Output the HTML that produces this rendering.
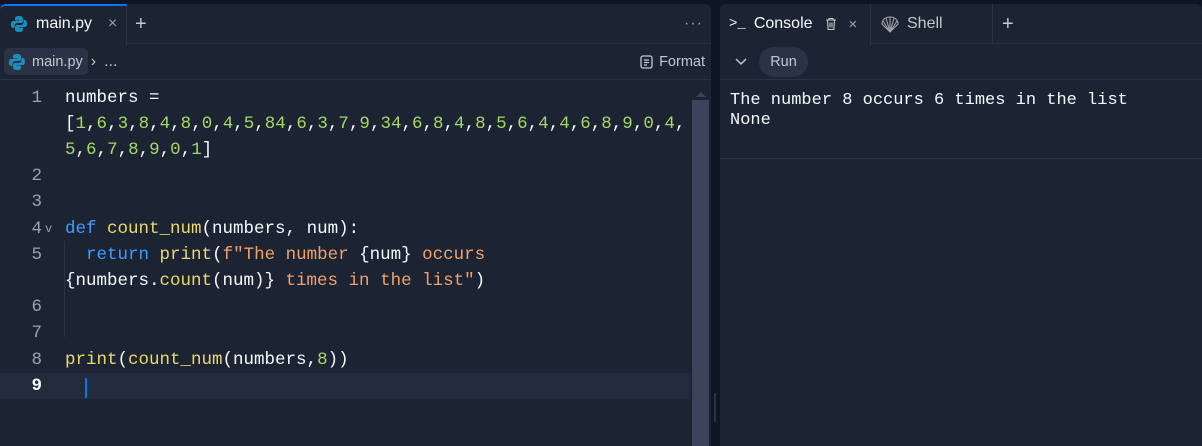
<!DOCTYPE html>
<html><head><meta charset="utf-8"><style>
*{margin:0;padding:0;box-sizing:border-box}
body{width:1202px;height:446px;background:#0e1525;position:relative;overflow:hidden;font-family:"Liberation Sans",sans-serif;color:#f5f9fc}
.pane{position:absolute;top:4px;background:#1c2333;bottom:0}
#ed{left:0;width:711px;border-radius:6px 6px 0 0}
#con{left:720px;right:0;border-radius:6px 6px 0 0}
.tabbar{position:absolute;left:0;right:0;top:0;height:40px;border-bottom:1px solid #2b3245}
.tab{position:absolute;top:0;height:40px;display:flex;align-items:center;font-size:16px}
.bar2{position:absolute;left:0;right:0;top:40px;height:36px;border-bottom:1px solid #2b3245}
.mono{font-family:"Liberation Mono",monospace;font-size:17.5px}
.ln{position:absolute;left:0;width:42px;text-align:right;color:#9da2a6}
.cl{position:absolute;left:65px;white-space:pre;color:#f5f9fc}
.g{color:#a5d864}.k{color:#3c9dff}.f{color:#e9d96b}.s{color:#f0a26b}
</style></head><body>
<div id="ed" class="pane">
 <div class="tabbar">
  <div style="position:absolute;left:0;top:0;width:127px;height:41px;background:#1c2333;border-top:2px solid #0079f2;border-right:1px solid #2b3245;border-radius:6px 0 0 0"></div>
  <div class="tab" style="left:10px">
   <svg width="18" height="18" viewBox="0 0 18 18"><path d="M9 1c-4 0-4 1.5-4 3v1.5h4.2V6H3C1.3 6 1 8 1 9.5S1.5 13 3 13h1.5v-2.2C4.5 9 6 8 7.5 8h3.5c1.3 0 2-.8 2-2V3.5C13 2 11.5 1 9 1z" fill="#1d8dba"/><path d="M9 17c4 0 4-1.5 4-3v-1.5H8.8V12H15c1.7 0 2-2 2-3.5S16.5 5 15 5h-1.5v2.2C13.5 9 12 10 10.5 10H7c-1.3 0-2 .8-2 2v2.5C5 16 6.5 17 9 17z" fill="#1d8dba"/></svg>
   <span style="margin-left:8px">main.py</span><span style="margin-left:16px;color:#9da2a6;font-size:16px">×</span></div>
  <div class="tab" style="left:135px;color:#c2c8cc;font-size:20px;font-weight:300">+</div>
  <div class="tab" style="right:8px;color:#9da2a6;font-size:16px;letter-spacing:1px">···</div>
 </div>
 <div class="bar2">
  <div style="position:absolute;left:4px;top:4px;width:84px;height:27px;background:#2b3245;border-radius:5px"></div>
  <div class="tab" style="left:8px;height:36px;color:#c2c8cc">
   <svg width="18" height="18" viewBox="0 0 18 18"><path d="M9 1c-4 0-4 1.5-4 3v1.5h4.2V6H3C1.3 6 1 8 1 9.5S1.5 13 3 13h1.5v-2.2C4.5 9 6 8 7.5 8h3.5c1.3 0 2-.8 2-2V3.5C13 2 11.5 1 9 1z" fill="#1d8dba"/><path d="M9 17c4 0 4-1.5 4-3v-1.5H8.8V12H15c1.7 0 2-2 2-3.5S16.5 5 15 5h-1.5v2.2C13.5 9 12 10 10.5 10H7c-1.3 0-2 .8-2 2v2.5C5 16 6.5 17 9 17z" fill="#1d8dba"/></svg>
   <span style="margin-left:6px;font-size:14.5px">main.py</span><span style="margin-left:8px">›</span><span style="margin-left:8px">...</span></div>
  <div class="tab" style="right:6px;height:36px;color:#c2c8cc;font-size:14.5px">
   <svg width="13" height="14" viewBox="0 0 13 14" style="margin-right:6px"><rect x="1" y="1" width="11" height="12" rx="2" fill="none" stroke="#c2c8cc" stroke-width="1.3"/><path d="M4 5h5M4 7.5h5M4 10h3" stroke="#c2c8cc" stroke-width="1.2"/></svg>Format</div>
 </div>
 <div style="position:absolute;left:0;top:369px;width:690px;height:26px;background:#232a3b"></div>
 <div style="position:absolute;left:692px;top:96px;width:17px;bottom:0;background:#3c445c"></div>
 <div style="position:absolute;left:696px;top:88px;width:0;height:0;border-left:5px solid transparent;border-right:5px solid transparent;border-bottom:5px solid #3c445c"></div>
 <div style="position:absolute;left:64px;top:237px;width:1px;height:96px;background:#2b3245"></div>
 <div class="mono">
  <div class="ln" style="top:84px">1</div><div class="cl" style="top:84px">numbers =</div>
  <div class="cl" style="top:110px">[<span class="g">1</span>,<span class="g">6</span>,<span class="g">3</span>,<span class="g">8</span>,<span class="g">4</span>,<span class="g">8</span>,<span class="g">0</span>,<span class="g">4</span>,<span class="g">5</span>,<span class="g">84</span>,<span class="g">6</span>,<span class="g">3</span>,<span class="g">7</span>,<span class="g">9</span>,<span class="g">34</span>,<span class="g">6</span>,<span class="g">8</span>,<span class="g">4</span>,<span class="g">8</span>,<span class="g">5</span>,<span class="g">6</span>,<span class="g">4</span>,<span class="g">4</span>,<span class="g">6</span>,<span class="g">8</span>,<span class="g">9</span>,<span class="g">0</span>,<span class="g">4</span>,</div>
  <div class="cl" style="top:136px"><span class="g">5</span>,<span class="g">6</span>,<span class="g">7</span>,<span class="g">8</span>,<span class="g">9</span>,<span class="g">0</span>,<span class="g">1</span>]</div>
  <div class="ln" style="top:162px">2</div>
  <div class="ln" style="top:188px">3</div>
  <div class="ln" style="top:215px">4</div><div style="position:absolute;left:45px;top:218px;font-size:12px;color:#9da2a6">v</div>
  <div class="cl" style="top:215px"><span class="k">def</span> <span class="f">count_num</span>(numbers, num):</div>
  <div class="ln" style="top:241px">5</div>
  <div class="cl" style="top:241px">  <span class="k">return</span> <span class="f">print</span>(<span class="s">f"The number </span>{num}<span class="s"> occurs</span></div>
  <div class="cl" style="top:267px">{numbers.<span class="f">count</span>(num)}<span class="s"> times in the list"</span>)</div>
  <div class="ln" style="top:293px">6</div>
  <div class="ln" style="top:319px">7</div>
  <div class="ln" style="top:346px">8</div>
  <div class="cl" style="top:346px"><span class="f">print</span>(<span class="f">count_num</span>(numbers,<span class="g">8</span>))</div>
  <div class="ln" style="top:372px;color:#f5f9fc;font-weight:bold">9</div>
 </div>
 <div style="position:absolute;left:85px;top:374px;width:2px;height:20px;background:#0079f2"></div>
</div>
<div style="position:absolute;left:714px;top:393px;width:2px;height:29px;background:#2b3245"></div>
<div id="con" class="pane">
 <div class="tabbar">
  <div style="position:absolute;left:0;top:0;width:151px;height:41px;background:#1c2333;border-right:1px solid #2b3245;border-radius:6px 0 0 0"></div>
  <div class="tab" style="left:9px"><span style="font-family:'Liberation Mono',monospace;font-size:14px">&gt;_</span><span style="margin-left:8px">Console</span>
   <svg width="12" height="14" viewBox="0 0 12 14" style="margin-left:12px"><path d="M1 3h10M4 3V1.5h4V3M2.5 3l.6 9.5h5.8L9.5 3M5 5.5v5M7 5.5v5" fill="none" stroke="#c2c8cc" stroke-width="1.1"/></svg>
   <span style="margin-left:12px;color:#9da2a6;font-size:15px">×</span></div>
  <div class="tab" style="left:160px;color:#c2c8cc">
   <svg width="20" height="18" viewBox="0 0 20 18"><path d="M10 17L2 9C2 5 5 2 10 2s8 3 8 7zM10 17L6 3M10 17V2M10 17l4-14M10 17L3 6M10 17l7-11" fill="none" stroke="#9da2a6" stroke-width="1.1"/></svg>
   <span style="margin-left:7px">Shell</span></div>
  <div style="position:absolute;left:272px;top:0;width:1px;height:40px;background:#2b3245"></div>
  <div class="tab" style="left:282px;color:#c2c8cc;font-size:20px;font-weight:300">+</div>
 </div>
 <div class="bar2" style="left:0;right:0">
  <svg width="12" height="8" viewBox="0 0 12 8" style="position:absolute;left:15px;top:14px"><path d="M1 1l5 5 5-5" fill="none" stroke="#c2c8cc" stroke-width="1.5"/></svg>
  <div style="position:absolute;left:39px;top:3px;width:49px;height:30px;border-radius:15px;background:#2b3245;color:#c2c8cc;font-size:14.5px;line-height:30px;text-align:center">Run</div>
 </div>
 <div style="position:absolute;left:0;right:0;top:154px;height:1px;background:#2b3245"></div>
 <div class="mono" style="position:absolute;left:10px;top:87px;font-size:17px;line-height:20px;white-space:pre">The number 8 occurs 6 times in the list
None</div>
</div>
</body></html>
